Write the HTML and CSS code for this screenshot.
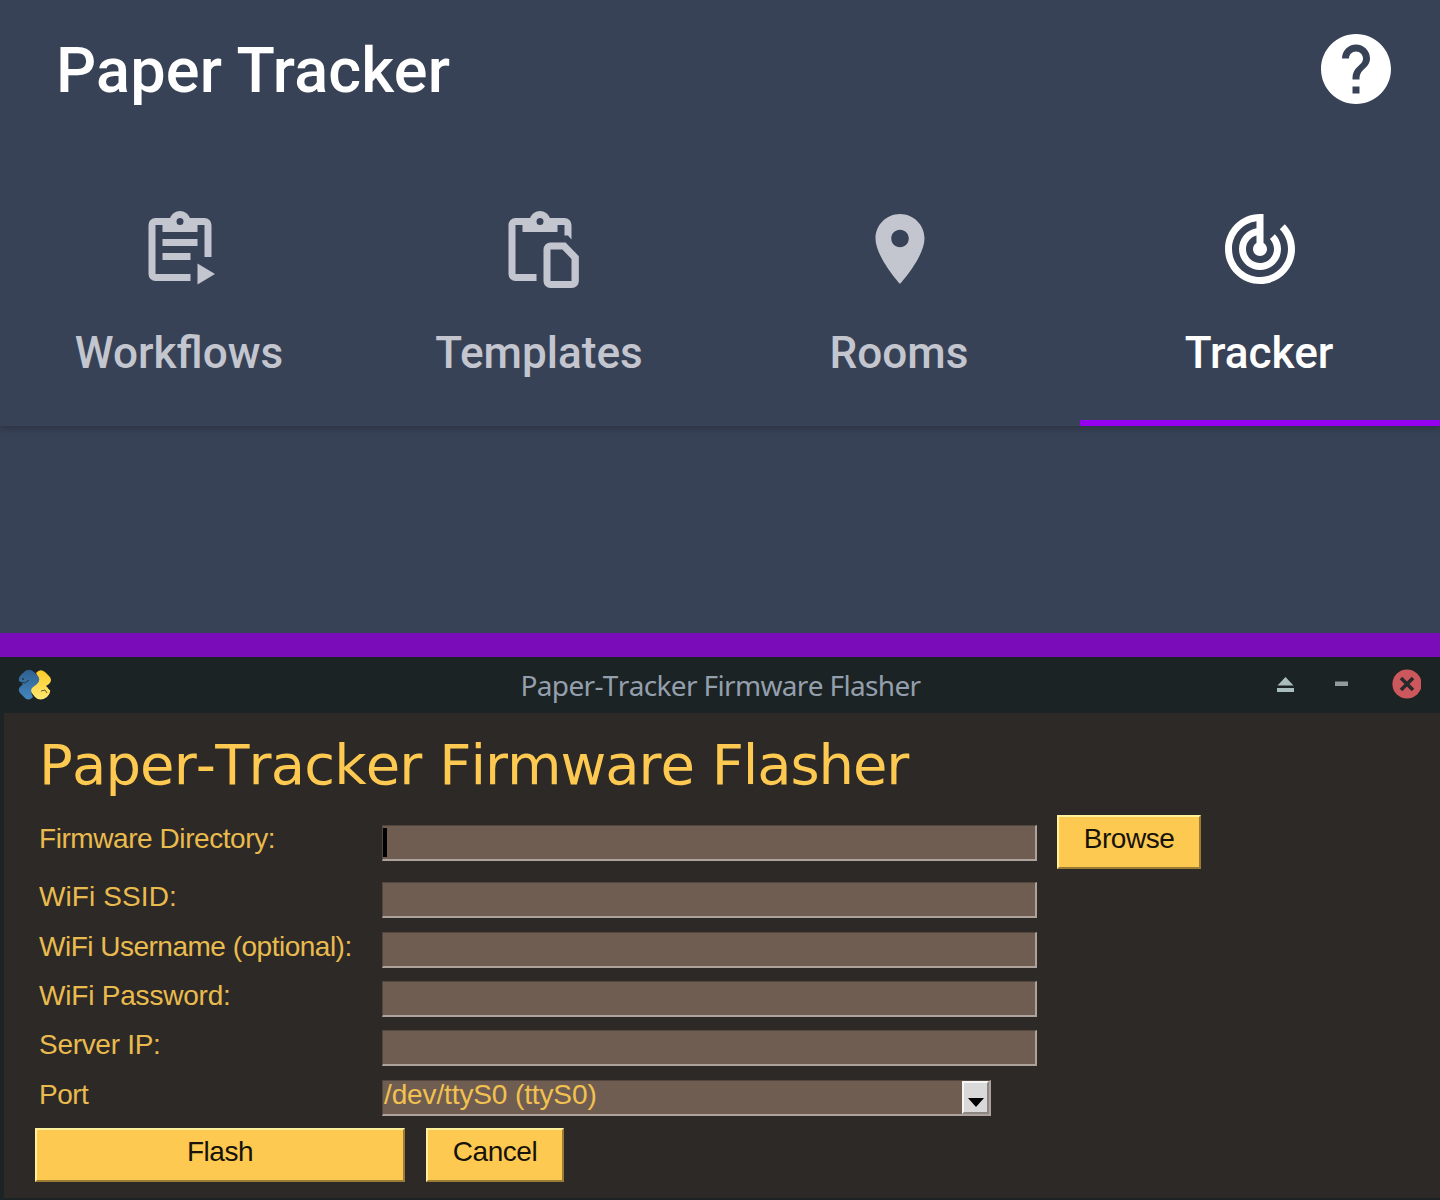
FILE: index.html
```html
<!DOCTYPE html>
<html lang="en">
<head>
<meta charset="utf-8">
<title>Paper Tracker</title>
<link rel="stylesheet" href="styles.css">
</head>
<body>
<section class="app">
  <header class="app-bar">
    <h1 class="app-title">Paper Tracker</h1>
    <svg class="icon" viewBox="0 0 24 24"><path d="M12 2C6.48 2 2 6.48 2 12s4.48 10 10 10 10-4.48 10-10S17.52 2 12 2zm1 17h-2v-2h2v2zm2.07-7.75l-.9.92C13.45 12.9 13 13.5 13 15h-2v-.5c0-1.1.45-2.1 1.17-2.83l1.24-1.26c.37-.36.59-.86.59-1.41 0-1.1-.9-2-2-2s-2 .9-2 2H8c0-2.21 1.79-4 4-4s4 1.79 4 4c0 .88-.36 1.68-.93 2.25z"/></svg>
  </header>
  <nav class="tabs">
    <a class="tab">
      <svg class="icon" viewBox="0 -0.15 24 24"><path fill-rule="evenodd" d="M19 3H14.82C14.4 1.84 13.3 1 12 1S9.6 1.84 9.18 3H5A2 2 0 0 0 3 5V19A2 2 0 0 0 5 21H15V19H5V5H7V7H17V5H19V14.1H21V5A2 2 0 0 0 19 3ZM12 3A1 1 0 1 1 12 5A1 1 0 1 1 12 3ZM7 9H17V11H7ZM7 13H15V15H7ZM17 16L22 19L17 22Z"/></svg>
      <span class="tab-label">Workflows</span>
    </a>
    <a class="tab">
      <svg class="icon" viewBox="0 -0.15 24 24"><path fill-rule="evenodd" d="M19 3H14.82C14.4 1.84 13.3 1 12 1S9.6 1.84 9.18 3H5A2 2 0 0 0 3 5V19A2 2 0 0 0 5 21H11V19H5V5H7V7H17V5H19V8H20L21 9.1V5A2 2 0 0 0 19 3ZM12 3A1 1 0 1 1 12 5A1 1 0 1 1 12 3ZM15 10H19.3L23.1 13.9V21A2 2 0 0 1 21.1 23H15A2 2 0 0 1 13 21V12A2 2 0 0 1 15 10ZM15 12V21H21V14.7L18.4 12Z"/></svg>
      <span class="tab-label">Templates</span>
    </a>
    <a class="tab">
      <svg class="icon" viewBox="0 0 24 24"><path d="M12 2C8.13 2 5 5.13 5 9c0 5.25 7 13 7 13s7-7.75 7-13c0-3.87-3.13-7-7-7zm0 9.5c-1.38 0-2.5-1.12-2.5-2.5s1.12-2.5 2.5-2.5 2.5 1.12 2.5 2.5-1.12 2.5-2.5 2.5z"/></svg>
      <span class="tab-label">Rooms</span>
    </a>
    <a class="tab tab-active">
      <svg class="icon" viewBox="0 0 24 24"><path d="M19.07 4.93l-1.41 1.41C19.1 7.79 20 9.79 20 12c0 4.42-3.58 8-8 8s-8-3.58-8-8c0-4.08 3.05-7.44 7-7.93v2.02C8.16 6.57 6 9.03 6 12c0 3.31 2.69 6 6 6s6-2.69 6-6c0-1.66-.67-3.16-1.76-4.24l-1.41 1.41C15.55 9.9 16 10.9 16 12c0 2.21-1.79 4-4 4s-4-1.79-4-4c0-1.86 1.28-3.41 3-3.86v2.14c-.6.35-1 .98-1 1.72 0 1.1.9 2 2 2s2-.9 2-2c0-.74-.4-1.38-1-1.72V2h-1C6.48 2 2 6.48 2 12s4.48 10 10 10 10-4.48 10-10c0-2.76-1.12-5.26-2.93-7.07z"/></svg>
      <span class="tab-label">Tracker</span>
    </a>
  </nav>
</section>
<div class="divider"></div>
<section class="window">
  <header class="title-bar">
    <svg class="logo" viewBox="0 0 34 32">
      <defs>
        <linearGradient id="blue" x2="0" y2="1"><stop stop-color="#30608f"/><stop offset="1" stop-color="#4387c0"/></linearGradient>
        <linearGradient id="gold" x2="0" y2="1"><stop stop-color="#ffcb26"/><stop offset="1" stop-color="#ffe873"/></linearGradient>
      </defs>
      <path fill="url(#gold)" d="M18 4Q22 -1 27 3L31 7Q35 11 31 15L28 17L32 21Q33 24 29 28Q22 33 17 28L13 23V17L21 10Z"/>
      <path fill="url(#blue)" d="M5 4Q10 -2 16 3L20 7Q23 11 19 15L14 19Q12 22 15 28Q10 33 6 28L2 24Q-1 20 3 17L5 15L1 12Q0 8 5 4Z"/>
      <path fill="none" stroke="#1c2324" stroke-width="1" stroke-opacity=".7" d="M2 13L7 14L11 11M23 22L27 21L29 24M30 19L33 22"/>
      <circle cx="5" cy="10" r="1" fill="#1c2324" fill-opacity=".7"/>
    </svg>
    <span class="window-title">Paper-Tracker Firmware Flasher</span>
    <svg class="controls" viewBox="0 0 146 32">
      <path fill="#a9bcbe" d="M2.5 16.5L10.5 8L18.5 16.5ZM2 19H19V23H2Z"/>
      <path fill="#949a9e" d="M60 12.5H73V17H60Z"/>
      <circle cx="132" cy="15" r="14.6" fill="#cc575d"/>
      <path stroke="#272a2b" stroke-width="3.6" d="M126 9L138 21M138 9L126 21"/>
    </svg>
  </header>
  <main class="panel">
    <h2 class="heading"><span class="w1">Paper-Tracker</span> <span class="w2">Firmware</span> <span class="w3">Flasher</span></h2>
    <div class="row row-first"><label class="label l-dir">Firmware Directory:</label><div class="field"><i class="caret"></i></div><button class="button browse"><span>Browse</span></button></div>
    <div class="row row-tall"><label class="label l-ssid">WiFi SSID:</label><div class="field"></div></div>
    <div class="row"><label class="label l-user">WiFi Username (optional):</label><div class="field"></div></div>
    <div class="row"><label class="label l-pass">WiFi Password:</label><div class="field"></div></div>
    <div class="row row-tall"><label class="label l-ip">Server IP:</label><div class="field"></div></div>
    <div class="row row-last"><label class="label l-port">Port</label><div class="field combo"><span class="value">/dev/ttyS0 (ttyS0)</span><span class="arrow"><svg class="arrow-icon" viewBox="0 0 16 9"><path d="M0 0H16L8 9Z"/></svg></span></div></div>
    <div class="actions"><button class="button flash"><span>Flash</span></button><button class="button cancel"><span>Cancel</span></button></div>
  </main>
</section>
</body>
</html>
```
FILE: styles.css
```css
* { box-sizing: border-box; }
body { margin: 0; width: 1440px; height: 1200px; overflow: hidden; background: #1c2324; }
h1, h2 { margin: 0; font-weight: normal; }
svg { display: block; flex: none; }

.app { height: 633px; background: #384256; font-family: Roboto, sans-serif; font-weight: 500; color: #fff; }
.app-bar { display: flex; align-items: center; justify-content: space-between; height: 196px; padding: 0 42px 58px 56px; }
.app-title { font-size: 63px; line-height: 74px; font-weight: 500; letter-spacing: .17px; white-space: nowrap; padding-top: 4px; }
.icon { width: 84px; height: 84px; fill: currentColor; }
.tabs { display: grid; grid-template-columns: repeat(4, 1fr); height: 230px; box-shadow: 0 3px 7px rgba(0, 0, 0, .22); clip-path: inset(0 0 -16px 0); }
.tab { display: flex; flex-direction: column; align-items: center; padding-top: 11px; color: #c4c6cf; border-bottom: 6px solid transparent; }
.tab-active { color: #fff; border-bottom-color: #9500f0; }
.tab-label { margin-top: 36px; padding-right: 2px; font-size: 44.1px; line-height: 53px; white-space: nowrap; }

.divider { height: 24px; background: #7a0cba; }

.window { height: 543px; background: #1c2324; font-family: "Liberation Sans", sans-serif; }
.title-bar { display: grid; grid-template-columns: 1fr auto 1fr; align-items: start; height: 56px; padding: 12px 19px 0 20px; }
.logo { width: 34px; height: 32px; margin-left: -2px; }
.window-title { font: 28px/32px "Noto Sans", sans-serif; font-kerning: none; letter-spacing: -.65px; color: #949fad; white-space: nowrap; }
.controls { width: 146px; height: 32px; justify-self: end; }
.panel { height: 485px; margin-left: 4px; padding: 22px 0 0 31px; background: #2d2926; }
.heading { height: 80px; padding-left: 4px; font: 56px/60px "DejaVu Sans", sans-serif; font-kerning: none; color: #fdc951; white-space: nowrap; }
.w1 { letter-spacing: -.85px; }
.w2 { letter-spacing: -1.05px; }
.w3 { letter-spacing: -1.1px; }

.row { display: flex; align-items: flex-start; height: 49px; padding-top: 10px; }
.row-first { height: 57px; }
.row-tall { height: 50px; }
.row-last { height: 48px; }
.label { width: 347px; padding-left: 4px; font-size: 28px; line-height: 29px; color: #e9bb4e; white-space: nowrap; }
.l-dir { margin-top: -1px; letter-spacing: -.43px; }
.l-ssid { letter-spacing: .1px; }
.l-user { letter-spacing: -.5px; }
.l-pass { letter-spacing: -.2px; }
.l-ip { letter-spacing: -.3px; }
.l-port { letter-spacing: -.5px; }
.field { display: flex; width: 655px; height: 36px; background: #705d51; border: solid; border-width: 1px 2px 2px 1px; border-color: #53463e #aea29c #aea29c #53463e; }
.caret { width: 4px; margin: 2px 0 0; height: 29px; background: #000; }
.combo { width: 609px; justify-content: space-between; }
.value { padding-left: 1px; font-size: 28px; line-height: 28px; letter-spacing: -.12px; color: #f2c14f; white-space: nowrap; }
.arrow { display: flex; justify-content: center; align-items: flex-end; width: 27px; height: 33px; padding-bottom: 5px; background: #d9d9d9; border: solid; border-width: 2px; border-color: #f5f5f5 #8b8784 #8b8784 #f5f5f5; }
.arrow-icon { width: 16px; height: 9px; }

.button { display: block; height: 54px; padding: 0; margin: 0; background: #fdc951; border: 2px solid; border-color: #fff09b #9c7c35 #9c7c35 #fff09b; font: 28px/32px "Liberation Sans", sans-serif; letter-spacing: -.45px; color: #17130a; text-align: center; }
.button span { display: block; margin-top: -7px; }
.browse { width: 144px; margin: -10px 0 0 20px; }
.actions { display: flex; gap: 21px; padding-top: 10px; }
.flash { width: 370px; }
.cancel { width: 138px; }
```
